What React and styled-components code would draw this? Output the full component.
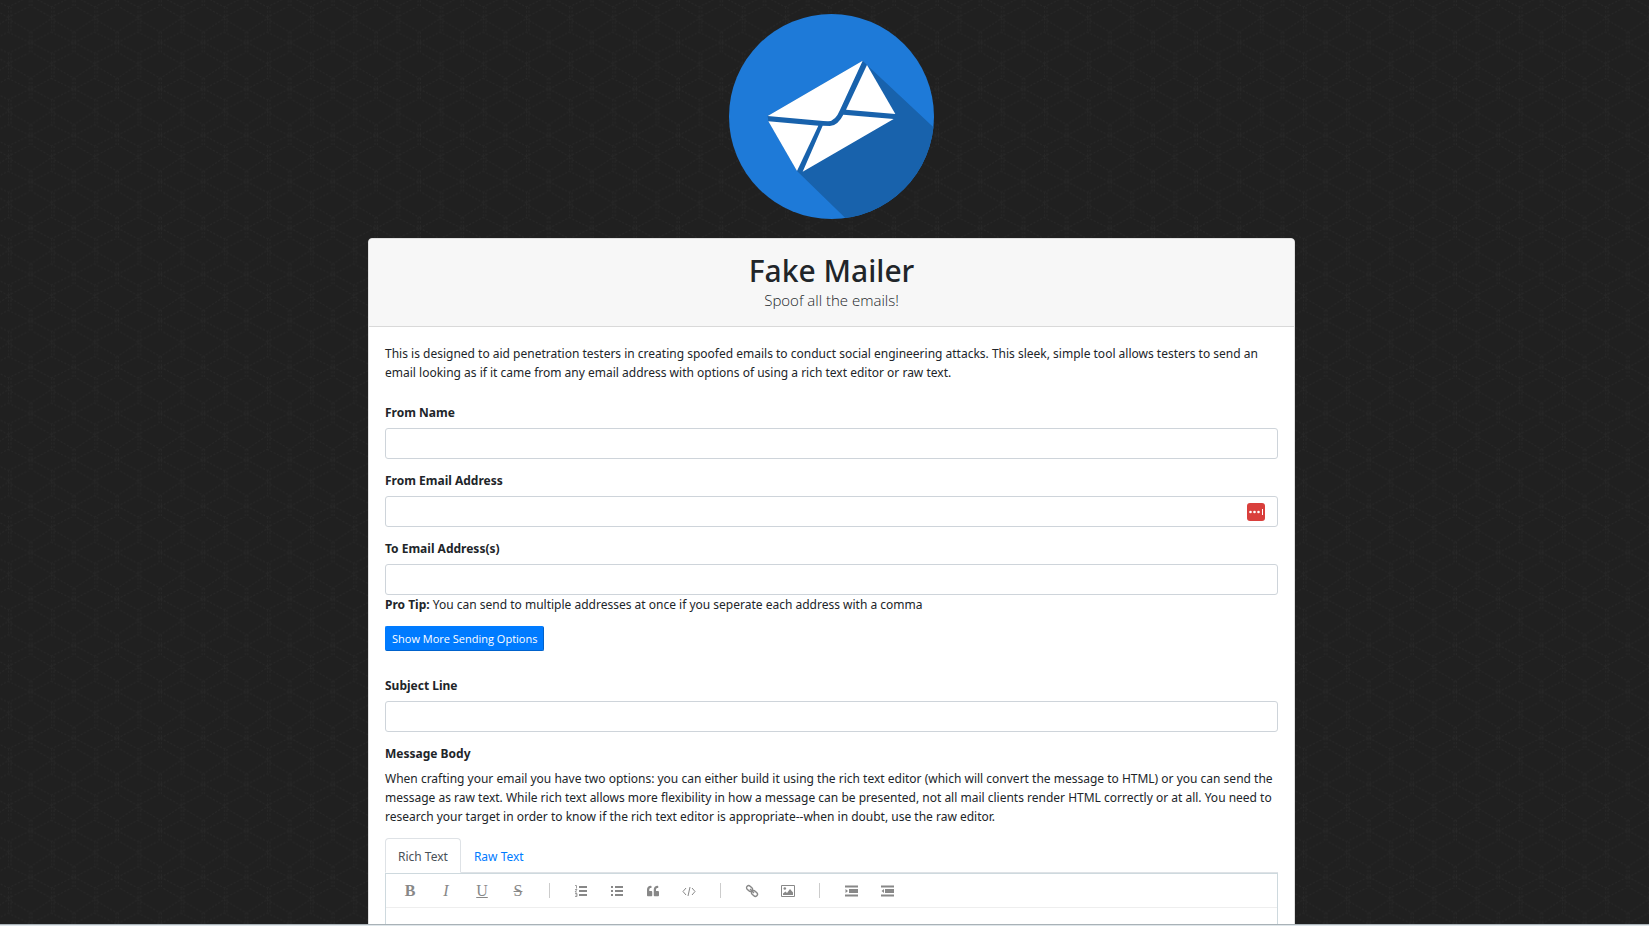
import React from "react";
import styled, { createGlobalStyle, css } from "styled-components";
import { FaQuoteLeft } from "react-icons/fa";

const GlobalStyle = createGlobalStyle`
  *, *::before, *::after { box-sizing: border-box; }
  body {
    margin: 0;
    background: #202020;
    color: #212529;
    font-family: "Noto Sans", "Open Sans", sans-serif;
    font-size: 12px;
    line-height: 19px;
  }
`;

const Viewport = styled.div`
  display: flex;
  flex-direction: column;
  height: 100vh;
  overflow: hidden;
`;

const Page = styled.main`
  position: relative;
  flex: 1;
  min-height: 0;
  overflow: hidden;
  padding: 14px 0 0 14px;
`;

const Backdrop = styled.svg`
  position: absolute;
  inset: 0;
  width: 100%;
  height: 100%;
`;

const BottomEdge = styled.div`
  flex: none;
  height: 2px;
  border-top: 1px solid #a9b2b7;
  background: #dfe6ea;
`;

const Container = styled.div`
  position: relative;
  max-width: 927px;
  margin: 0 auto;
`;

const Logo = styled.svg`
  display: block;
  width: 205px;
  height: 205px;
  margin: 0 auto 19px;
`;

const Card = styled.section`
  background: #fff;
  border: 1px solid #dfdfdf;
  border-radius: 4px;
  overflow: hidden;
`;

const CardHeader = styled.header`
  padding: 12px 16px 15px;
  background: #f7f7f7;
  border-bottom: 1px solid #d9d9d9;
  text-align: center;
`;

const Title = styled.h1`
  margin: 0;
  font-size: 30px;
  font-weight: 500;
  line-height: 39px;
`;

const Subtitle = styled.p`
  margin: 0;
  font-family: "Open Sans", sans-serif;
  font-size: 15px;
  font-weight: 300;
  line-height: 21px;
`;

const CardBody = styled.form`
  padding: 17px 16px;
`;

const Text = styled.p`
  margin: 0 0 ${(p) => p.$gap || 12}px;
`;

const Field = styled.div`
  margin-bottom: ${(p) => p.$gap ?? 12}px;
`;

const labelStyle = css`
  display: block;
  margin: 0 0 6px;
  font-size: 12px;
  font-weight: 700;
  line-height: 19px;
`;

const Label = styled.label`
  ${labelStyle}
`;

const GroupHeading = styled.h2`
  ${labelStyle}
`;

const InputWrap = styled.div`
  position: relative;
`;

const Input = styled.input`
  display: block;
  width: 100%;
  height: 31px;
  padding: 4px 8px;
  border: 1px solid #ced4da;
  border-radius: 3px;
  background: #fff;
  font: inherit;
`;

const PasswordBadge = styled.svg`
  position: absolute;
  top: 7px;
  right: 13px;
  width: 18px;
  height: 18px;
`;

const PrimaryButton = styled.button`
  display: block;
  height: 25px;
  margin: 12px 0 25px;
  padding: 0 6px;
  border: 1px solid #007bff;
  border-right-color: #0062cc;
  border-bottom-color: #0062cc;
  border-radius: 2px;
  background: #007bff;
  color: #fff;
  font-family: "Open Sans", sans-serif;
  font-size: 11px;
  white-space: nowrap;
`;

const Tabs = styled.nav`
  display: flex;
  border-bottom: 1px solid #dee2e6;
`;

const Tab = styled.a`
  height: 35px;
  margin-bottom: -1px;
  padding: 8px 12px;
  border: 1px solid ${(p) => (p.$active ? "#dee2e6" : "transparent")};
  border-bottom-color: ${(p) => (p.$active ? "#fff" : "transparent")};
  border-radius: 4px 4px 0 0;
  color: ${(p) => (p.$active ? "#495057" : "#007bff")};
  text-decoration: none;
`;

const Editor = styled.div`
  height: 320px;
  border: 1px solid #ced9de;
`;

const Toolbar = styled.div`
  display: flex;
  align-items: center;
  height: 34px;
  padding: 0 6px;
  border-bottom: 1px solid #eee;
`;

const ToolButton = styled.button`
  display: flex;
  align-items: center;
  justify-content: center;
  width: 36px;
  height: 32px;
  padding: 0;
  border: 0;
  background: none;
  color: #888;
  font-family: "Liberation Serif", serif;
  font-size: 16px;
  line-height: 20px;
  font-weight: ${(p) => (p.$bold ? 700 : 400)};
  font-style: ${(p) => (p.$italic ? "italic" : "normal")};
  text-decoration: ${(p) => p.$line || "none"};
`;

const Divider = styled.span`
  width: 1px;
  height: 15px;
  margin: 0 13px;
  background: #ccc;
`;

const Icon = ({ children, size = 14 }) => (
  <svg width={size} height={size} viewBox="0 0 14 14" fill="currentColor" aria-hidden="true">
    {children}
  </svg>
);

function HexPattern() {
  return (
    <Backdrop aria-hidden="true">
      <defs>
        <pattern
          id="hex"
          width="129.5"
          height="139.1"
          patternUnits="userSpaceOnUse"
          patternTransform="translate(8 7) scale(0.33333)"
        >
          <g fill="none" stroke="#282828" strokeWidth="3" strokeDasharray="6 5">
            <path d="M1 0V75M9 0V75" />
            <path d="M65 75V139M72 75V139" />
            <path d="M0 75L68 108L130 75" />
            <path d="M0 35L68 75L130 35" />
            <path d="M0 139L68 106L130 139" />
            <path d="M0 31L68 -4L130 31" />
          </g>
        </pattern>
      </defs>
      <rect width="100%" height="100%" fill="#202020" />
      <rect width="100%" height="100%" fill="url(#hex)" />
    </Backdrop>
  );
}

function MailLogo() {
  return (
    <Logo viewBox="87 42 615 615" role="img" aria-label="Fake Mailer">
      <defs>
        <clipPath id="disc">
          <circle cx="394.5" cy="349.5" r="307.5" />
        </clipPath>
      </defs>
      <g clipPath="url(#disc)">
        <rect x="87" y="42" width="615" height="615" fill="#1e7ad8" />
        <path
          fill="#1862ac"
          d="M203 348L488 182L501 195L702 383V657H439L291 513L205 364Z"
        />
        <g fill="#fff">
          <path d="M203 348L488 182L420 330Q406 364 384 364L370 363Z" />
          <path d="M501 195L586 342L438 329Z" />
          <path d="M205 364L355 377L291 513Z" />
          <path d="M368 377L390 378Q414 376 430 344L581 357L308 515Z" />
        </g>
      </g>
    </Logo>
  );
}

function EditorToolbar() {
  return (
    <Toolbar role="toolbar" aria-label="Formatting">
      <ToolButton type="button" $bold>B</ToolButton>
      <ToolButton type="button" $italic>I</ToolButton>
      <ToolButton type="button" $line="underline">U</ToolButton>
      <ToolButton type="button" $line="line-through">S</ToolButton>
      <Divider />
      <ToolButton type="button" aria-label="Numbered list">
        <Icon>
          <path d="M5 2h8v2H5zM5 6h8v2H5zM5 10h8v2H5z" />
          <path d="M1 1.5h1.5v3M1 5.5h2L1 8h2M1 9.5h2v3H1M1.5 11H3" fill="none" stroke="currentColor" strokeWidth="0.8" />
        </Icon>
      </ToolButton>
      <ToolButton type="button" aria-label="Bulleted list">
        <Icon>
          <path d="M5 2h8v2H5zM5 6h8v2H5zM5 10h8v2H5z" />
          <path d="M1 2h2v2H1zM1 6h2v2H1zM1 10h2v2H1z" />
        </Icon>
      </ToolButton>
      <ToolButton type="button" aria-label="Quote">
        <FaQuoteLeft size={12} />
      </ToolButton>
      <ToolButton type="button" aria-label="Code">
        <Icon>
          <path d="M4 4L1 7.5L4 11M10 4L13 7.5L10 11M8 3L6 12" fill="none" stroke="currentColor" />
        </Icon>
      </ToolButton>
      <Divider />
      <ToolButton type="button" aria-label="Link">
        <Icon>
          <g fill="none" stroke="currentColor" strokeWidth="1.4">
            <rect x="1.2" y="2.4" width="6.6" height="4.2" rx="2.1" transform="rotate(45 4.5 4.5)" />
            <rect x="6.2" y="7.4" width="6.6" height="4.2" rx="2.1" transform="rotate(45 9.5 9.5)" />
            <path d="M5 5L9 9" />
          </g>
        </Icon>
      </ToolButton>
      <ToolButton type="button" aria-label="Image">
        <Icon>
          <path d="M0.5 1.5h13v11h-13z" fill="none" stroke="currentColor" />
          <path d="M2 11V9.5L4.5 7.5L6 9L9 5L12 8.5V11Z" />
          <circle cx="3.8" cy="4.5" r="1.3" />
        </Icon>
      </ToolButton>
      <Divider />
      <ToolButton type="button" aria-label="Indent">
        <Icon>
          <path d="M1 1.5h13v2H1zM5 5h9v4H5zM1 10.5h13v2H1zM1.5 5L4 7L1.5 9z" />
        </Icon>
      </ToolButton>
      <ToolButton type="button" aria-label="Outdent">
        <Icon>
          <path d="M1 1.5h13v2H1zM5 5h9v4H5zM1 10.5h13v2H1zM4 5L1.5 7L4 9z" />
        </Icon>
      </ToolButton>
    </Toolbar>
  );
}

export default function App() {
  return (
    <Viewport>
      <GlobalStyle />
      <Page>
        <HexPattern />
        <Container>
          <MailLogo />
          <Card>
            <CardHeader>
              <Title>Fake Mailer</Title>
              <Subtitle>Spoof all the emails!</Subtitle>
            </CardHeader>
            <CardBody>
              <Text $gap={21}>
                This is designed to aid penetration testers in creating spoofed emails to conduct
                social engineering attacks. This sleek, simple tool allows testers to send an email
                looking as if it came from any email address with options of using a rich text
                editor or raw text.
              </Text>
              <Field>
                <Label htmlFor="from-name">From Name</Label>
                <Input id="from-name" type="text" />
              </Field>
              <Field>
                <Label htmlFor="from-email">From Email Address</Label>
                <InputWrap>
                  <Input id="from-email" type="text" />
                  <PasswordBadge viewBox="0 0 18 18" aria-hidden="true">
                    <rect width="18" height="18" rx="3" fill="#d93f3c" />
                    <g fill="#fff">
                      <circle cx="3.5" cy="9" r="1.3" />
                      <circle cx="7.5" cy="9" r="1.3" />
                      <circle cx="11.5" cy="9" r="1.3" />
                      <rect x="15" y="6" width="1" height="6" />
                    </g>
                  </PasswordBadge>
                </InputWrap>
              </Field>
              <Field $gap={0}>
                <Label htmlFor="to-email">To Email Address(s)</Label>
                <Input id="to-email" type="text" />
                <div>
                  <strong>Pro Tip:</strong> You can send to multiple addresses at once if you
                  seperate each address with a comma
                </div>
              </Field>
              <PrimaryButton type="button">Show More Sending Options</PrimaryButton>
              <Field>
                <Label htmlFor="subject">Subject Line</Label>
                <Input id="subject" type="text" />
              </Field>
              <GroupHeading>Message Body</GroupHeading>
              <Text>
                When crafting your email you have two options: you can either build it using the
                rich text editor (which will convert the message to HTML) or you can send the
                message as raw text. While rich text allows more flexibility in how a message can be
                presented, not all mail clients render HTML correctly or at all. You need to
                research your target in order to know if the rich text editor is appropriate--when
                in doubt, use the raw editor.
              </Text>
              <Tabs>
                <Tab href="#rich" $active>Rich Text</Tab>
                <Tab href="#raw">Raw Text</Tab>
              </Tabs>
              <Editor>
                <EditorToolbar />
              </Editor>
            </CardBody>
          </Card>
        </Container>
      </Page>
      <BottomEdge />
    </Viewport>
  );
}
